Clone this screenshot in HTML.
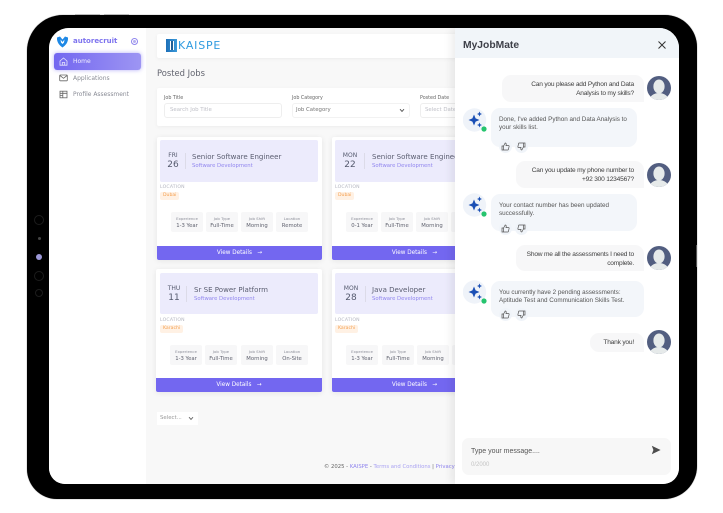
<!DOCTYPE html>
<html><head><meta charset="utf-8">
<style>
*{box-sizing:border-box;margin:0;padding:0}
html,body{width:723px;height:513px;overflow:hidden;background:#fff;font-family:"DejaVu Sans","Liberation Sans",sans-serif}
.a{position:absolute}
.t{position:absolute;white-space:nowrap;line-height:1}
.card{position:absolute;width:165px;height:123px;background:#fff;box-shadow:0 1px 6px rgba(0,0,0,.08);border-radius:2px;overflow:hidden}
.lav{position:absolute;left:3px;top:3px;width:158px;height:42px;background:#ecebfc;border-radius:2px}
.day{position:absolute;top:13px;width:34px;text-align:center;font-size:6px;color:#555a6e;line-height:1}
.num{position:absolute;top:21px;width:34px;text-align:center;font-size:9px;color:#555a6e;line-height:1}
.sep{position:absolute;left:25px;top:13px;width:1px;height:16px;background:#dcdbe8}
.ti{position:absolute;left:32px;top:13px;font-size:7.05px;color:#5a5d70;white-space:nowrap;line-height:1}
.su{position:absolute;left:32px;top:24px;font-size:5.3px;color:#8f84ee;white-space:nowrap;line-height:1}
.lo{position:absolute;left:3px;top:49px;font-size:4.6px;color:#b4b6c0;letter-spacing:.2px;line-height:1}
.tag{position:absolute;left:3px;top:55px;height:8px;padding:0 3px;background:#fff1e4;border-radius:2px;font-size:4.6px;line-height:8px;color:#f4a050}
.cell{position:absolute;top:75px;width:32px;height:20px;background:#f7f7f8;border-radius:2px;text-align:center}
.cell i{display:block;font-style:normal;font-size:3.9px;color:#8b8d98;margin-top:5px;line-height:1;white-space:nowrap}
.cell b{display:block;font-weight:normal;font-size:5.3px;color:#5f616e;margin-top:3px;line-height:1;white-space:nowrap}
.bar{position:absolute;left:0;bottom:0;width:165px;height:14px;background:#7367f0;color:#fff;font-size:5.7px;line-height:15px;text-align:center}
.r2 .lav{top:4px;height:41px}
.r2 .lo{top:50px}
.r2 .tag{top:56px}
.r2 .cell{top:76px}
.u{position:absolute;background:#f7f7f8;border-radius:9px 9px 0 9px;left:0;text-align:right;font-family:"Liberation Sans",sans-serif;font-size:6.6px;letter-spacing:-.2px;line-height:8.5px;color:#3f3f3f;padding-right:10px;padding-top:6px;white-space:nowrap}
.b{position:absolute;background:#f3f6fa;border-radius:9px;font-family:"Liberation Sans",sans-serif;font-size:6.3px;line-height:8.5px;color:#555;padding:7.5px 0 0 8px;white-space:nowrap}
.ic{position:absolute;border-radius:50%;background:#f0f4f9;width:13px;height:13px}
svg{position:absolute;display:block}
</style></head><body>

<!-- tablet frame -->
<div class="a" style="left:27px;top:15px;width:670px;height:484px;background:#000;border-radius:36px 32px 33px 30px;box-shadow:0 0 1px #666"></div>
<div class="a" style="left:75px;top:14px;width:25px;height:1px;background:#bbb"></div>
<div class="a" style="left:104px;top:14px;width:25px;height:1px;background:#bbb"></div>
<div class="a" style="left:696px;top:245px;width:1px;height:22px;background:#555"></div>
<div class="a" style="left:34px;top:215px;width:10px;height:10px;border:1px solid #1c1c1c;border-radius:50%"></div>
<div class="a" style="left:38px;top:237px;width:3px;height:3px;background:#444;border-radius:50%"></div>
<div class="a" style="left:36px;top:254px;width:6px;height:6px;background:#9c98d8;border-radius:50%"></div>
<div class="a" style="left:34px;top:271px;width:10px;height:10px;border:1px solid #1c1c1c;border-radius:50%"></div>
<div class="a" style="left:35px;top:289px;width:8px;height:8px;border:1px solid #1c1c1c;border-radius:50%"></div>

<!-- screen -->
<div class="a" style="left:49px;top:28px;width:630px;height:456px;background:#f8f8f8;border-radius:20px 20px 16px 16px;overflow:hidden">
 <div style="position:absolute;left:-49px;top:-28px;width:723px;height:513px">

  <!-- sidebar -->
  <div class="a" style="left:49px;top:28px;width:97px;height:456px;background:#fff"></div>
  <svg style="left:56px;top:36px" width="13" height="12" viewBox="0 0 13 12"><path d="M1 1.5 L4 0.5 L6.5 3.5 L9 0.5 L12 1.5 C12.5 6 9.5 9.5 6.5 11.5 C3.5 9.5 .5 6 1 1.5Z" fill="#1e88e5"/><path d="M4.5 3.5 L6.5 6 L8.5 3.5 L8 6.5 L6.5 8 L5 6.5Z" fill="#fff"/></svg>
  <div class="t" style="left:73px;top:38px;font-size:7px;font-weight:bold;color:#7d73ee">autorecruit</div>
  <div class="a" style="left:131px;top:38px;width:7px;height:7px;border:1px solid #8f86ee;border-radius:50%"></div>
  <div class="a" style="left:133px;top:40px;width:3px;height:3px;background:#b5afef;border-radius:50%"></div>
  <div class="a" style="left:54px;top:53px;width:87px;height:17px;background:linear-gradient(90deg,#7367f0,#9d95f3);border-radius:3px;box-shadow:0 0 4px rgba(115,103,240,.55)"></div>
  <svg style="left:59px;top:57px" width="9" height="9" viewBox="0 0 9 9" fill="none" stroke="#e8e6fc" stroke-width=".8"><path d="M1 4 L4.5 1 L8 4 V8.2 H1Z M3.3 8.2 V5.5 H5.7 V8.2"/></svg>
  <div class="t" style="left:73px;top:59px;font-size:6px;color:#f2f1fe">Home</div>
  <svg style="left:59px;top:74px" width="9" height="8" viewBox="0 0 9 8" fill="none" stroke="#666" stroke-width=".8"><rect x=".7" y="1" width="7.6" height="5.8" rx=".6"/><path d="M.9 1.5 L4.5 4.3 L8.1 1.5"/></svg>
  <div class="t" style="left:73px;top:76px;font-size:6px;color:#8a8c96">Applications</div>
  <svg style="left:59px;top:90px" width="9" height="9" viewBox="0 0 9 9" fill="none" stroke="#666" stroke-width=".8"><rect x="1" y="1.2" width="7" height="6.6"/><path d="M1 3.3 H8 M3.8 1.2 V7.8 M1 5.4 H3.8"/></svg>
  <div class="t" style="left:73px;top:92px;font-size:5.95px;color:#8a8c96">Profile Assessment</div>

  <!-- top bar -->
  <div class="a" style="left:157px;top:34px;width:320px;height:24px;background:#fff;border-radius:2px;box-shadow:0 1px 4px rgba(0,0,0,.05)"></div>
  <div class="a" style="left:166px;top:39px;width:11px;height:13px;background:linear-gradient(90deg,#1d6fb8,#3a9ad9)"></div>
  <div class="a" style="left:170px;top:41px;width:4px;height:9px;background:#fff"></div>
  <div class="a" style="left:171px;top:41px;width:2px;height:9px;background:#1f5f96"></div>
  <div class="t" style="left:178px;top:40px;font-size:11px;letter-spacing:.8px;color:#2f9be0">KAISPE</div>

  <div class="t" style="left:157px;top:69px;font-size:8.4px;color:#62646f">Posted Jobs</div>

  <!-- filter -->
  <div class="a" style="left:157px;top:88px;width:320px;height:38px;background:#fff;border-radius:2px;box-shadow:0 1px 4px rgba(0,0,0,.05)"></div>
  <div class="t" style="left:164px;top:97px;font-size:4.8px;color:#666">Job Title</div>
  <div class="a" style="left:164px;top:103px;width:118px;height:15px;border:1px solid #eee;border-radius:3px"></div>
  <div class="t" style="left:170px;top:108px;font-size:5.4px;color:#c0c1c8">Search Job Title</div>
  <div class="t" style="left:292px;top:97px;font-size:4.8px;color:#666">Job Category</div>
  <div class="a" style="left:292px;top:103px;width:118px;height:15px;border:1px solid #f2f2f2;border-radius:3px"></div>
  <div class="t" style="left:296px;top:108px;font-size:5.4px;color:#777">Job Category</div>
  <svg style="left:399px;top:108px" width="6" height="5" viewBox="0 0 6 5" fill="none" stroke="#555" stroke-width=".9"><path d="M1 1.2 L3 3.4 L5 1.2"/></svg>
  <div class="t" style="left:420px;top:97px;font-size:4.8px;color:#666">Posted Date</div>
  <div class="a" style="left:420px;top:103px;width:60px;height:15px;border:1px solid #eee;border-radius:3px"></div>
  <div class="t" style="left:425px;top:108px;font-size:5.4px;color:#c0c1c8">Select Date</div>

  <!-- card 1 -->
  <div class="card" style="left:157px;top:137px">
   <div class="lav"><div class="day" style="left:-4px">FRI</div><div class="num" style="left:-4px">26</div><div class="sep"></div><div class="ti">Senior Software Engineer</div><div class="su">Software Development</div></div>
   <div class="lo">LOCATION</div><div class="tag">Dubai</div>
   <div class="cell" style="left:14px"><i>Experience</i><b>1-3 Year</b></div>
   <div class="cell" style="left:49px"><i>Job Type</i><b>Full-Time</b></div>
   <div class="cell" style="left:84px"><i>Job Shift</i><b>Morning</b></div>
   <div class="cell" style="left:119px"><i>Location</i><b>Remote</b></div>
   <div class="bar">View Details &nbsp; →</div>
  </div>
  <!-- card 2 -->
  <div class="card" style="left:332px;top:137px">
   <div class="lav"><div class="day" style="left:-2px">MON</div><div class="num" style="left:-2px">22</div><div class="sep" style="left:29px"></div><div class="ti" style="left:37px">Senior Software Engineer</div><div class="su" style="left:37px">Software Development</div></div>
   <div class="lo">LOCATION</div><div class="tag">Dubai</div>
   <div class="cell" style="left:14px"><i>Experience</i><b>0-1 Year</b></div>
   <div class="cell" style="left:49px"><i>Job Type</i><b>Full-Time</b></div>
   <div class="cell" style="left:84px"><i>Job Shift</i><b>Morning</b></div>
   <div class="cell" style="left:119px"><i>Location</i><b>Remote</b></div>
   <div class="bar">View Details &nbsp; →</div>
  </div>
  <!-- card 3 -->
  <div class="card r2" style="left:156px;top:269px;width:166px">
   <div class="lav" style="left:4px"><div class="day" style="left:-3px">THU</div><div class="num" style="left:-3px">11</div><div class="sep" style="left:26px"></div><div class="ti" style="left:34px">Sr SE Power Platform</div><div class="su" style="left:34px">Software Development</div></div>
   <div class="lo" style="left:4px">LOCATION</div><div class="tag" style="left:4px">Karachi</div>
   <div class="cell" style="left:14px"><i>Experience</i><b>1-3 Year</b></div>
   <div class="cell" style="left:49px"><i>Job Type</i><b>Full-Time</b></div>
   <div class="cell" style="left:85px"><i>Job Shift</i><b>Morning</b></div>
   <div class="cell" style="left:120px"><i>Location</i><b>On-Site</b></div>
   <div class="bar" style="width:166px">View Details &nbsp; →</div>
  </div>
  <!-- card 4 -->
  <div class="card r2" style="left:332px;top:269px">
   <div class="lav"><div class="day" style="left:-1px">MON</div><div class="num" style="left:-1px">28</div><div class="sep" style="left:30px"></div><div class="ti" style="left:37px">Java Developer</div><div class="su" style="left:37px">Software Development</div></div>
   <div class="lo">LOCATION</div><div class="tag">Karachi</div>
   <div class="cell" style="left:14px"><i>Experience</i><b>1-3 Year</b></div>
   <div class="cell" style="left:50px"><i>Job Type</i><b>Full-Time</b></div>
   <div class="cell" style="left:85px"><i>Job Shift</i><b>Morning</b></div>
   <div class="cell" style="left:120px"><i>Location</i><b>On-Site</b></div>
   <div class="bar">View Details &nbsp; →</div>
  </div>

  <!-- select -->
  <div class="a" style="left:157px;top:412px;width:41px;height:13px;background:#fff"></div>
  <div class="t" style="left:160px;top:416px;font-size:5.4px;color:#999">Select...</div>
  <svg style="left:188px;top:416px" width="6" height="5" viewBox="0 0 6 5" fill="none" stroke="#666" stroke-width=".9"><path d="M1 1.2 L3 3.4 L5 1.2"/></svg>

  <!-- footer -->
  <div class="t" style="left:324px;top:465px;font-size:5.3px;color:#666">© 2025 - <span style="color:#8f84ee">KAISPE</span> - <span style="color:#a9a2f2">Terms and Conditions</span> | <span style="color:#8f84ee">Privacy</span></div>

  <!-- chat panel -->
  <div class="a" style="left:455px;top:28px;width:224px;height:456px;background:#fff;box-shadow:-4px 0 8px rgba(0,0,0,.07)">
   <div class="a" style="left:0;top:0;width:224px;height:30px;background:#f1f5f9"></div>
  </div>
  <div class="t" style="left:463px;top:41px;font-family:'Liberation Sans',sans-serif;font-size:10.3px;font-weight:bold;color:#3d3f48">MyJobMate</div>
  <svg style="left:657px;top:40px" width="10" height="10" viewBox="0 0 10 10" fill="none" stroke="#333" stroke-width="1"><path d="M1.5 1.5 L8.5 8.5 M8.5 1.5 L1.5 8.5"/></svg>

  <!-- messages -->
  <div class="u" style="left:502px;top:75px;width:142px;height:27px">Can you please add Python and Data<br>Analysis to my skills?</div>
  <div class="b" style="left:491px;top:108px;width:146px;height:39px">Done, I've added Python and Data Analysis to<br>your skills list.</div>
  <div class="u" style="left:516px;top:161px;width:128px;height:27px">Can you update my phone number to<br>+92 300 1234567?</div>
  <div class="b" style="left:491px;top:194px;width:146px;height:37px">Your contact number has been updated<br>successfully.</div>
  <div class="u" style="left:516px;top:245px;width:128px;height:26px">Show me all the assessments I need to<br>complete.</div>
  <div class="b" style="left:491px;top:281px;width:153px;height:36px">You currently have 2 pending assessments:<br>Aptitude Test and Communication Skills Test.</div>
  <div class="u" style="left:590px;top:333px;width:54px;height:19px;padding-top:6px">Thank you!</div>

  <!-- user avatars -->
  <svg style="left:647px;top:76px" width="24" height="24" viewBox="0 0 24 24"><defs><clipPath id="c"><circle cx="12" cy="12" r="12"/></clipPath></defs><g clip-path="url(#c)"><rect width="24" height="24" fill="#525e80"/><ellipse cx="12" cy="10.5" rx="5.6" ry="7" fill="#e6eaea"/><ellipse cx="12" cy="25" rx="10" ry="8" fill="#e6eaea"/></g></svg>
  <svg style="left:647px;top:163px" width="24" height="24" viewBox="0 0 24 24"><g clip-path="url(#c)"><rect width="24" height="24" fill="#525e80"/><ellipse cx="12" cy="10.5" rx="5.6" ry="7" fill="#e6eaea"/><ellipse cx="12" cy="25" rx="10" ry="8" fill="#e6eaea"/></g></svg>
  <svg style="left:647px;top:246px" width="24" height="24" viewBox="0 0 24 24"><g clip-path="url(#c)"><rect width="24" height="24" fill="#525e80"/><ellipse cx="12" cy="10.5" rx="5.6" ry="7" fill="#e6eaea"/><ellipse cx="12" cy="25" rx="10" ry="8" fill="#e6eaea"/></g></svg>
  <svg style="left:647px;top:330px" width="24" height="24" viewBox="0 0 24 24"><g clip-path="url(#c)"><rect width="24" height="24" fill="#525e80"/><ellipse cx="12" cy="10.5" rx="5.6" ry="7" fill="#e6eaea"/><ellipse cx="12" cy="25" rx="10" ry="8" fill="#e6eaea"/></g></svg>

  <!-- bot avatars -->
  <svg style="left:463px;top:108px" width="25" height="25" viewBox="0 0 25 25"><circle cx="11.5" cy="12" r="11.7" fill="#eff3f9"/><path d="M11 6.5 L12.6 10.4 L16.5 12 L12.6 13.6 L11 17.5 L9.4 13.6 L5.5 12 L9.4 10.4Z" fill="#1a4fb5"/><path d="M16.5 3.5 L17.3 5.2 L19 6 L17.3 6.8 L16.5 8.5 L15.7 6.8 L14 6 L15.7 5.2Z" fill="#1a4fb5"/><path d="M16.5 14.5 L17.2 16.3 L19 17 L17.2 17.7 L16.5 19.5 L15.8 17.7 L14 17 L15.8 16.3Z" fill="#1a4fb5"/><circle cx="21" cy="21" r="2.6" fill="#26c46e"/></svg>
  <svg style="left:463px;top:193px" width="25" height="25" viewBox="0 0 25 25"><circle cx="11.5" cy="12" r="11.7" fill="#eff3f9"/><path d="M11 6.5 L12.6 10.4 L16.5 12 L12.6 13.6 L11 17.5 L9.4 13.6 L5.5 12 L9.4 10.4Z" fill="#1a4fb5"/><path d="M16.5 3.5 L17.3 5.2 L19 6 L17.3 6.8 L16.5 8.5 L15.7 6.8 L14 6 L15.7 5.2Z" fill="#1a4fb5"/><path d="M16.5 14.5 L17.2 16.3 L19 17 L17.2 17.7 L16.5 19.5 L15.8 17.7 L14 17 L15.8 16.3Z" fill="#1a4fb5"/><circle cx="21" cy="21" r="2.6" fill="#26c46e"/></svg>
  <svg style="left:463px;top:280px" width="25" height="25" viewBox="0 0 25 25"><circle cx="11.5" cy="12" r="11.7" fill="#eff3f9"/><path d="M11 6.5 L12.6 10.4 L16.5 12 L12.6 13.6 L11 17.5 L9.4 13.6 L5.5 12 L9.4 10.4Z" fill="#1a4fb5"/><path d="M16.5 3.5 L17.3 5.2 L19 6 L17.3 6.8 L16.5 8.5 L15.7 6.8 L14 6 L15.7 5.2Z" fill="#1a4fb5"/><path d="M16.5 14.5 L17.2 16.3 L19 17 L17.2 17.7 L16.5 19.5 L15.8 17.7 L14 17 L15.8 16.3Z" fill="#1a4fb5"/><circle cx="21" cy="21" r="2.6" fill="#26c46e"/></svg>

  <!-- thumbs -->
  <div class="ic" style="left:499px;top:140px"></div><div class="ic" style="left:515px;top:140px"></div>
  <svg style="left:501px;top:142px" width="9" height="9" viewBox="0 0 9 9" fill="none" stroke="#555" stroke-width=".7"><path d="M1 4 H2.6 V8 H1Z M2.6 4 L4.2 1 C5 1 5.3 1.6 5.2 2.4 L5 3.6 H7.6 C8 3.6 8.2 4 8.1 4.4 L7.4 7.5 C7.3 7.8 7.1 8 6.8 8 H2.6"/></svg>
  <svg style="left:517px;top:142px" width="9" height="9" viewBox="0 0 9 9" fill="none" stroke="#555" stroke-width=".7"><path d="M8 5 H6.4 V1 H8Z M6.4 5 L4.8 8 C4 8 3.7 7.4 3.8 6.6 L4 5.4 H1.4 C1 5.4 .8 5 .9 4.6 L1.6 1.5 C1.7 1.2 1.9 1 2.2 1 H6.4"/></svg>

  <div class="ic" style="left:499px;top:222px"></div><div class="ic" style="left:515px;top:222px"></div>
  <svg style="left:501px;top:224px" width="9" height="9" viewBox="0 0 9 9" fill="none" stroke="#555" stroke-width=".7"><path d="M1 4 H2.6 V8 H1Z M2.6 4 L4.2 1 C5 1 5.3 1.6 5.2 2.4 L5 3.6 H7.6 C8 3.6 8.2 4 8.1 4.4 L7.4 7.5 C7.3 7.8 7.1 8 6.8 8 H2.6"/></svg>
  <svg style="left:517px;top:224px" width="9" height="9" viewBox="0 0 9 9" fill="none" stroke="#555" stroke-width=".7"><path d="M8 5 H6.4 V1 H8Z M6.4 5 L4.8 8 C4 8 3.7 7.4 3.8 6.6 L4 5.4 H1.4 C1 5.4 .8 5 .9 4.6 L1.6 1.5 C1.7 1.2 1.9 1 2.2 1 H6.4"/></svg>

  <div class="ic" style="left:499px;top:308px"></div><div class="ic" style="left:515px;top:308px"></div>
  <svg style="left:501px;top:310px" width="9" height="9" viewBox="0 0 9 9" fill="none" stroke="#555" stroke-width=".7"><path d="M1 4 H2.6 V8 H1Z M2.6 4 L4.2 1 C5 1 5.3 1.6 5.2 2.4 L5 3.6 H7.6 C8 3.6 8.2 4 8.1 4.4 L7.4 7.5 C7.3 7.8 7.1 8 6.8 8 H2.6"/></svg>
  <svg style="left:517px;top:310px" width="9" height="9" viewBox="0 0 9 9" fill="none" stroke="#555" stroke-width=".7"><path d="M8 5 H6.4 V1 H8Z M6.4 5 L4.8 8 C4 8 3.7 7.4 3.8 6.6 L4 5.4 H1.4 C1 5.4 .8 5 .9 4.6 L1.6 1.5 C1.7 1.2 1.9 1 2.2 1 H6.4"/></svg>

  <!-- input -->
  <div class="a" style="left:462px;top:438px;width:209px;height:37px;background:#f7f7f7;border-radius:7px"></div>
  <div class="t" style="left:471px;top:448px;font-family:'Liberation Sans',sans-serif;font-size:7px;color:#555">Type your message....</div>
  <div class="t" style="left:471px;top:462px;font-family:'Liberation Sans',sans-serif;font-size:6px;color:#c4c4c4">0/2000</div>
  <svg style="left:651px;top:445px" width="10" height="10" viewBox="0 0 10 10"><path d="M.8 .8 L9.6 5 L.8 9.2 L2.4 5Z" fill="#4d4d4d"/></svg>
 </div>
</div>
</body></html>
